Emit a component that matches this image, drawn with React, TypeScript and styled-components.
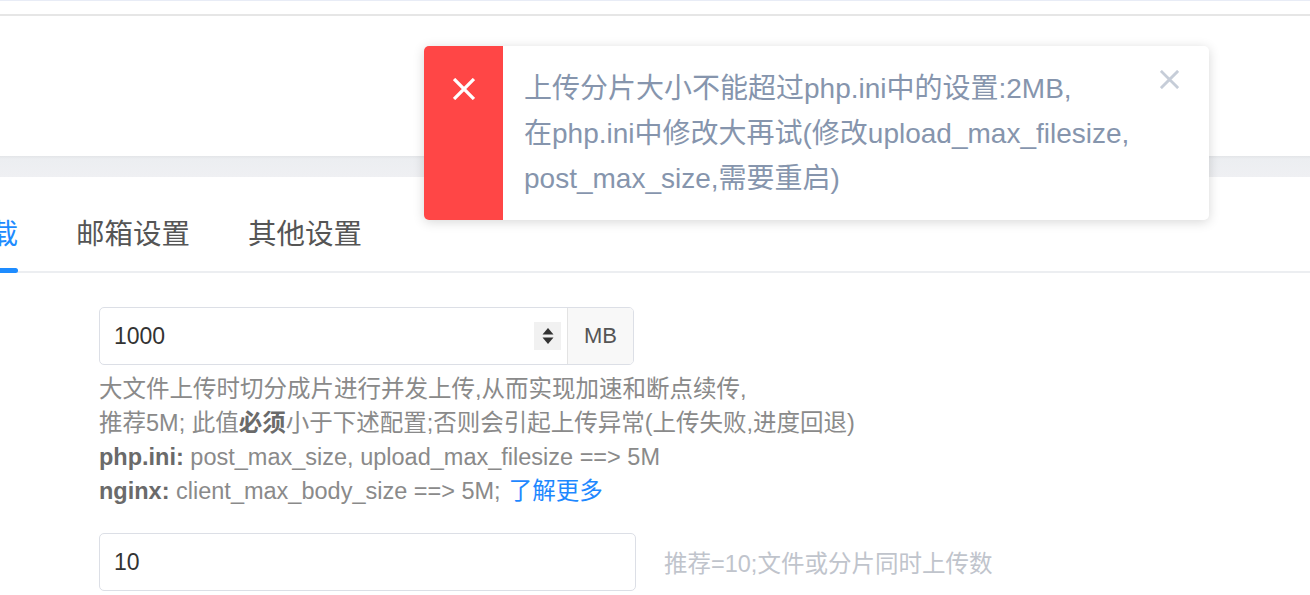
import React from "react";
import styled, { createGlobalStyle } from "styled-components";

const Global = createGlobalStyle`
  html, body { margin: 0; padding: 0; background: #fff; overflow: hidden; }
  body { font-family: "Liberation Sans", "Noto Sans CJK SC", sans-serif; }
  * { box-sizing: border-box; }
`;

const Page = styled.div`
  width: 1310px;
  height: 595px;
  overflow: hidden;
  position: relative;
  background: #fff;
`;

const TopBar = styled.div`
  height: 16px;
  border-top: 1px solid #e8ecf6;
  border-bottom: 2px solid #e6e6e6;
  background: #fff;
`;

const HeaderPanel = styled.div`
  height: 140px;
  background: #fff;
`;

const Gap = styled.div`
  height: 21px;
  background: linear-gradient(#e3e5e8 0, #eceef1 3px, #eff0f3 100%);
`;

const Card = styled.div`
  background: #fff;
`;

const TabBar = styled.div`
  display: flex;
  gap: 58px;
  margin-left: -96px;
  border-bottom: 2px solid #eceef1;
`;

const Tab = styled.div<{ $active?: boolean }>`
  position: relative;
  padding: 37px 0 17px;
  font-size: 28.5px;
  line-height: 40px;
  color: ${(p) => (p.$active ? "#1e8cff" : "#555")};
  white-space: nowrap;
  &::after {
    content: "";
    display: ${(p) => (p.$active ? "block" : "none")};
    position: absolute;
    left: 0;
    right: 0;
    bottom: -2px;
    height: 5px;
    border-radius: 3px;
    background: #1e8cff;
  }
`;

const Form = styled.div`
  padding: 34px 0 0 99px;
`;

const InputGroup = styled.div`
  display: flex;
  width: 535px;
  height: 58px;
  border: 1px solid #dcdfe6;
  border-radius: 5px;
  overflow: hidden;
`;

const Field = styled.input`
  flex: 1;
  min-width: 0;
  border: none;
  outline: none;
  padding: 0 14px;
  font-family: "Liberation Sans", "Noto Sans CJK SC", sans-serif;
  font-size: 23px;
  color: #333;
  background: transparent;
`;

const Spinner = styled.div`
  align-self: center;
  width: 27px;
  height: 28px;
  margin-right: 6px;
  background: #f1f1f1;
  display: flex;
  align-items: center;
  justify-content: center;
`;

const Addon = styled.div`
  width: 66px;
  border-left: 1px solid #e3e3e3;
  background: #f8f8f8;
  display: flex;
  align-items: center;
  justify-content: center;
  font-size: 22px;
  color: #555;
`;

const Help = styled.div`
  margin-top: 7px;
  font-size: 23.5px;
  line-height: 34px;
  color: #8a8a8a;
  white-space: nowrap;
`;

const Strong = styled.b`
  color: #6a6a6a;
  font-weight: bold;
`;

const Link = styled.a`
  color: #1e88ff;
  text-decoration: none;
  margin-left: 8px;
`;

const Row = styled.div`
  display: flex;
  align-items: center;
  margin-top: 25px;
`;

const PlainInput = styled.div`
  width: 537px;
  height: 58px;
  border: 1px solid #dcdfe6;
  border-radius: 5px;
  display: flex;
`;

const Hint = styled.span`
  margin-left: 28px;
  font-size: 23.5px;
  color: #c0c4cc;
`;

const Toast = styled.div`
  position: absolute;
  left: 424px;
  top: 46px;
  width: 785px;
  height: 174px;
  display: flex;
  background: #fff;
  border-radius: 5px;
  overflow: hidden;
  box-shadow: 0 2px 12px rgba(0, 0, 0, 0.16);
`;

const ToastIconBox = styled.div`
  width: 79px;
  flex: none;
  background: #ff4646;
  display: flex;
  justify-content: center;
  padding-top: 32px;
`;

const ToastText = styled.div`
  flex: 1;
  padding: 20px 0 0 21px;
  font-size: 28px;
  line-height: 45px;
  color: #8695ad;
  white-space: nowrap;
`;

const ToastClose = styled.div`
  width: 49px;
  flex: none;
  padding-top: 24px;
  display: flex;
  justify-content: flex-start;
`;

const Cross = ({ size, color, width }: { size: number; color: string; width: number }) => (
  <svg width={size} height={size} viewBox="0 0 20 20">
    <path d="M2 2 L18 18 M18 2 L2 18" stroke={color} strokeWidth={width} strokeLinecap="square" />
  </svg>
);

export default function App() {
  return (
    <Page>
      <Global />
      <TopBar />
      <HeaderPanel />
      <Gap />
      <Card>
        <TabBar>
          <Tab $active>上传下载</Tab>
          <Tab>邮箱设置</Tab>
          <Tab>其他设置</Tab>
        </TabBar>
        <Form>
          <InputGroup>
            <Field defaultValue="1000" readOnly />
            <Spinner>
              <svg width="14" height="20" viewBox="0 0 14 20">
                <path d="M7 2 L12.5 8.5 H1.5 Z" fill="#333" />
                <path d="M7 18 L12.5 11.5 H1.5 Z" fill="#333" />
              </svg>
            </Spinner>
            <Addon>MB</Addon>
          </InputGroup>
          <Help>
            大文件上传时切分成片进行并发上传,从而实现加速和断点续传,
            <br />
            推荐5M; 此值<Strong>必须</Strong>小于下述配置;否则会引起上传异常(上传失败,进度回退)
            <br />
            <Strong>php.ini:</Strong> post_max_size, upload_max_filesize ==&gt; 5M
            <br />
            <Strong>nginx:</Strong> client_max_body_size ==&gt; 5M;<Link href="#">了解更多</Link>
          </Help>
          <Row>
            <PlainInput>
              <Field defaultValue="10" readOnly />
            </PlainInput>
            <Hint>推荐=10;文件或分片同时上传数</Hint>
          </Row>
        </Form>
      </Card>
      <Toast>
        <ToastIconBox>
          <Cross size={22} color="#fff" width={3} />
        </ToastIconBox>
        <ToastText>
          上传分片大小不能超过php.ini中的设置:2MB,
          <br />
          在php.ini中修改大再试(修改upload_max_filesize,
          <br />
          post_max_size,需要重启)
        </ToastText>
        <ToastClose>
          <Cross size={19} color="#c6cdd8" width={3} />
        </ToastClose>
      </Toast>
    </Page>
  );
}
